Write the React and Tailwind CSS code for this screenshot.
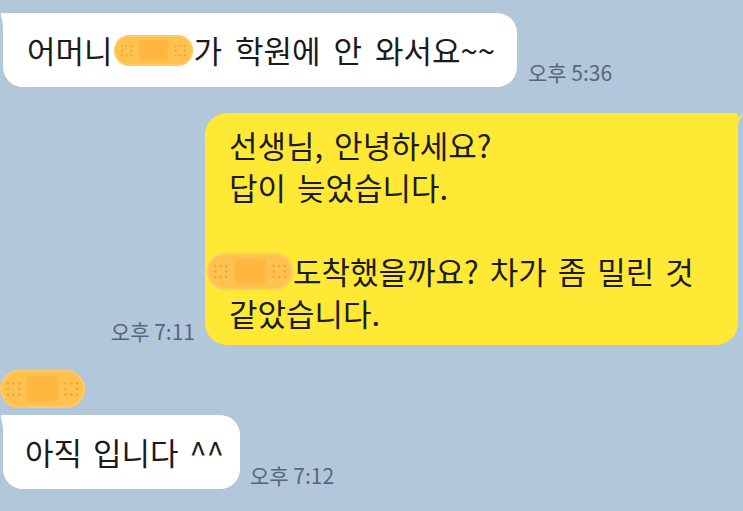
import React from "react";

function Bandage({ w = 80, h = 32, className = "" }) {
  const r = h / 2;
  const cw = w * 0.36;
  const ch = h * 0.66;
  const cx = (w - cw) / 2;
  const cy = (h - ch) / 2;
  const dots = [];
  const leftX = w * 0.16;
  const rightX = w * 0.84;
  const step = h * 0.15;
  for (const bx of [leftX, rightX]) {
    for (let i = -1; i <= 1; i++) {
      for (let j = -1; j <= 1; j++) {
        if (i === 0 && j === 0) continue;
        dots.push(
          <circle key={`${bx}-${i}-${j}`} cx={bx + i * step} cy={h / 2 + j * step} r={h * 0.035} fill="#eea53a" />
        );
      }
    }
  }
  return (
    <svg width={w} height={h} viewBox={`0 0 ${w} ${h}`} className={className}>
      <rect x="0" y="0" width={w} height={h} rx={r} fill="#ffc24e" />
      <rect x="1" y="1" width={w - 2} height={h - 2} rx={r - 1} fill="none" stroke="#ffcc6a" strokeWidth="1.5" />
      <rect x={cx} y={cy} width={cw} height={ch} rx="2" fill="#ffb63f" />
      {dots}
    </svg>
  );
}

function LeftTail() {
  return (
    <svg width="16" height="18" viewBox="0 0 16 18" className="absolute left-[-3px] top-0">
      <path d="M16 0 L2 0 Q0 0 1 3 Q3 9 3 18 L16 18 Z" fill="#ffffff" />
    </svg>
  );
}

function RightTail() {
  return (
    <svg width="18" height="20" viewBox="0 0 18 20" className="absolute right-[-5px] top-0">
      <path d="M0 0 L10 0 Q12 4 13 5 Q15 3 18 0 Q16 5 13 10 L13 20 L0 20 Z" fill="#ffe935" />
    </svg>
  );
}

export default function App() {
  return (
    <div
      className="w-[743px] h-[511px] overflow-hidden bg-[#b2c7da] flex flex-col pt-[13px] text-[#1b1b1b]"
      style={{ fontFamily: '"Noto Sans CJK KR", "Noto Sans", sans-serif' }}
    >
      <div className="flex items-end gap-[11px] pl-[3px]">
        <div className="relative w-[514px] h-[74px] bg-white rounded-[20px] rounded-tl-[4px] pl-[24px] py-[16px] text-[31px] leading-[42px] [word-spacing:6px] whitespace-nowrap flex items-center">
          <LeftTail />
          <span className="relative">어머니</span>
          <Bandage w={79} h={31} className="relative mx-[1px]" />
          <span className="relative">가 학원에 안 와서요~~</span>
        </div>
        <span className="mb-[3px] text-[21px] leading-[24px] text-[#56667a] whitespace-nowrap">오후 5:36</span>
      </div>

      <div className="mt-[26px] flex items-end justify-end gap-[10px] pr-[5px]">
        <span className="mb-[2px] text-[21px] leading-[24px] text-[#56667a] whitespace-nowrap">오후 7:11</span>
        <div className="relative w-[533px] h-[232px] bg-[#ffe935] rounded-[22px] rounded-tr-[4px] pl-[24px] py-[11px] text-[31px] leading-[42px] [word-spacing:4px] whitespace-nowrap">
          <RightTail />
          <div>선생님, 안녕하세요?</div>
          <div>답이 늦었습니다.</div>
          <div className="h-[42px]"></div>
          <div className="flex items-center -ml-[22px]">
            <Bandage w={86} h={37} />
            <span>도착했을까요? 차가 좀 밀린 것</span>
          </div>
          <div>같았습니다.</div>
        </div>
      </div>

      <div className="mt-[25px] flex">
        <Bandage w={85} h={38} />
      </div>

      <div className="mt-[7px] flex items-end gap-[10px] pl-[3px]">
        <div className="relative w-[237px] h-[74px] bg-white rounded-[20px] rounded-tl-[4px] pl-[22px] text-[31px] leading-[42px] [word-spacing:4px] whitespace-nowrap flex items-center">
          <LeftTail />
          <span className="relative">아직 입니다 ^^</span>
        </div>
        <span className="mb-[2px] text-[21px] leading-[24px] text-[#56667a] whitespace-nowrap">오후 7:12</span>
      </div>
    </div>
  );
}
